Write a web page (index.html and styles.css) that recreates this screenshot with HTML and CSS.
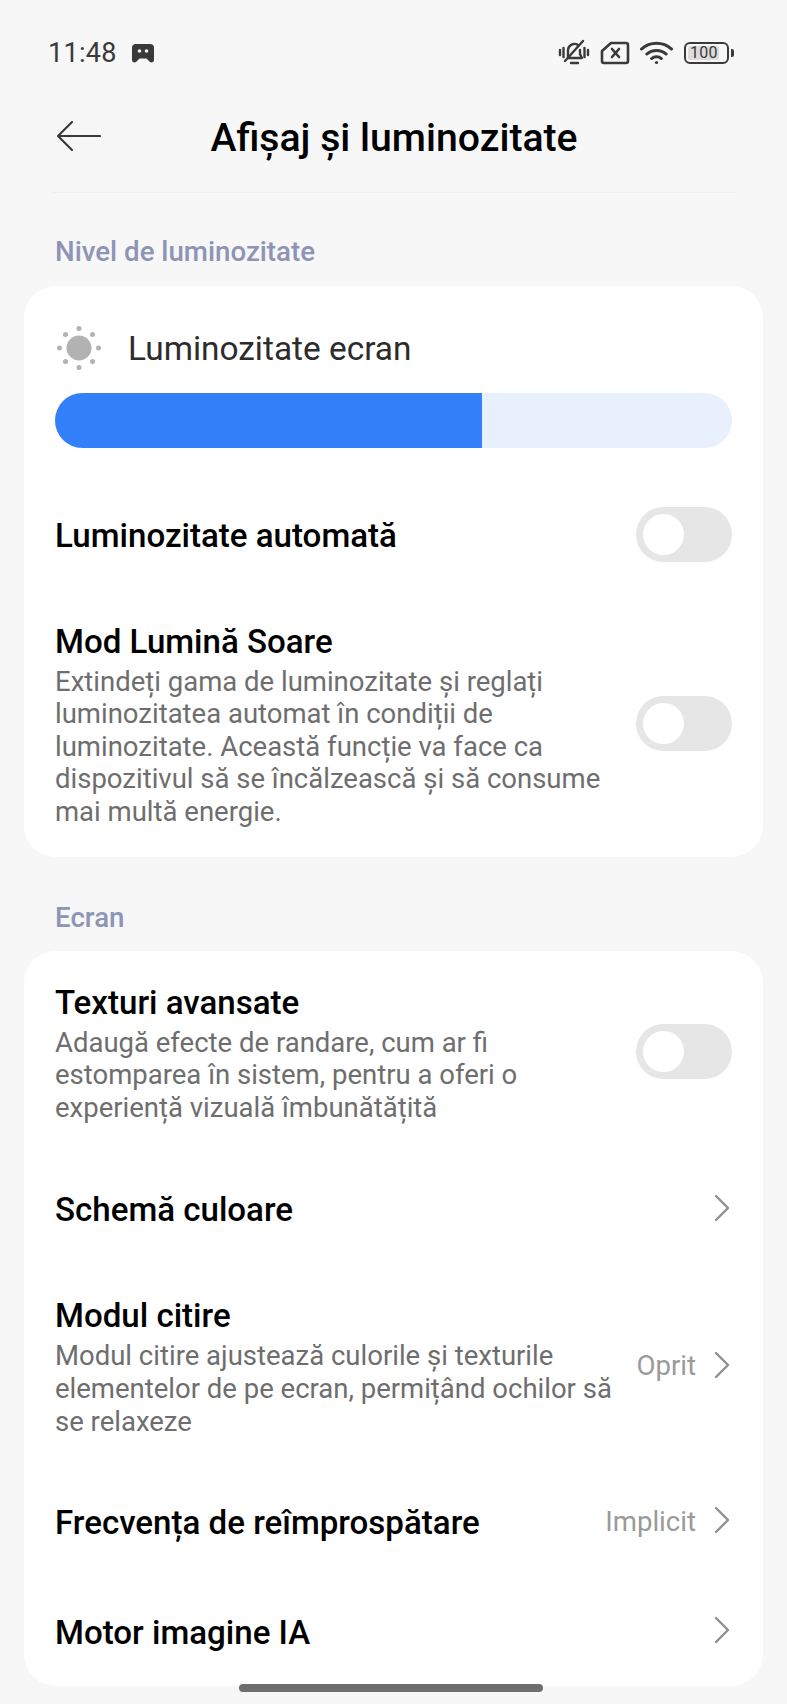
FILE: index.html
```html
<!DOCTYPE html>
<html lang="ro">
<head>
<meta charset="utf-8">
<title>Afișaj și luminozitate</title>
<link rel="stylesheet" href="styles.css">
</head>
<body>
<div class="status">
  <div class="status-left">
    <span class="time">11:48</span>
    <svg class="game" viewBox="0 0 22 19"><path fill="#3a3a3a" fill-rule="evenodd" d="M4 0h14a4 4 0 0 1 4 4v12a2.5 2.5 0 0 1-4.3 1.8L14.500 14.500h-7L4.300 17.800A2.500 2.500 0 0 1 0 16V4a4 4 0 0 1 4-4z"/><circle cx="7.500" cy="7" r="1.800" fill="#f7f7f7"/><circle cx="14.500" cy="7" r="1.800" fill="#f7f7f7"/></svg>
  </div>
  <div class="status-right">
    <svg class="ic-bell" viewBox="0 0 32 28" fill="none" stroke="#3a3a3a" stroke-width="2.400" stroke-linecap="round" stroke-linejoin="round"><path d="M10 19V11a6.500 6.500 0 0 1 10-5M22 11v4l2 4H10"/><path d="M13 24h7"/><path d="M7 22 25 2"/><path d="M2 11v5M5.500 9v9M26.500 9v9M30 11v5"/></svg>
    <svg class="ic-sim" viewBox="0 0 30 24" fill="none" stroke="#3a3a3a" stroke-width="2.600" stroke-linejoin="round"><path d="M11 2h15a2 2 0 0 1 2 2v16a2 2 0 0 1-2 2H4a2 2 0 0 1-2-2V10z"/><path stroke-linecap="round" d="M12 8l7 8M19 8l-7 8"/></svg>
    <svg class="ic-wifi" viewBox="0.5 0 31 24" preserveAspectRatio="none" fill="none" stroke="#3a3a3a" stroke-width="3" stroke-linecap="round"><path d="M2 8a20 20 0 0 1 28 0M7 13a13 13 0 0 1 18 0M11.500 17.500a6.500 6.500 0 0 1 9 0"/><circle cx="16" cy="21.500" r="1.500" fill="#3a3a3a" stroke="none"/></svg>
    <div class="battery"><div class="battery-body"><span class="battery-fill">100</span></div><span class="battery-tip"></span></div>
  </div>
</div>

<header class="nav">
  <svg class="back" viewBox="0 0 44 30" fill="none" stroke="#3a3a3a" stroke-width="2.200" stroke-linecap="round" stroke-linejoin="round"><path d="M1 15h42M15 1 1 15l14 14"/></svg>
  <h1 class="title">Afișaj și luminozitate</h1>
</header>

<h2 class="section first">Nivel de luminozitate</h2>
<section class="card card-a">
  <div class="bright-head">
    <svg class="sun" viewBox="0 0 44 44"><circle cx="22" cy="22" r="12.500" fill="#b2b2b2"/><g fill="#b2b2b2"><circle cx="22" cy="2.500" r="2.500"/><circle cx="22" cy="41.500" r="2.500"/><circle cx="2.500" cy="22" r="2.500"/><circle cx="41.500" cy="22" r="2.500"/><circle cx="8.500" cy="8.500" r="2.500"/><circle cx="35.500" cy="8.500" r="2.500"/><circle cx="8.500" cy="35.500" r="2.500"/><circle cx="35.500" cy="35.500" r="2.500"/></g></svg>
    <span class="bright-label">Luminozitate ecran</span>
  </div>
  <div class="slider"><div class="slider-fill"></div></div>
  <div class="row row-auto">
    <div class="row-text"><div class="row-title">Luminozitate automată</div></div>
    <span class="toggle"></span>
  </div>
  <div class="row row-sun">
    <div class="row-text">
      <div class="row-title row-title-top">Mod Lumină Soare</div>
      <p class="row-desc">Extindeți gama de luminozitate și reglați luminozitatea automat în condiții de luminozitate. Această funcție va face ca dispozitivul să se încălzească și să consume mai multă energie.</p>
    </div>
    <span class="toggle"></span>
  </div>
</section>

<h2 class="section">Ecran</h2>
<section class="card card-b">
  <div class="row row-tex">
    <div class="row-text">
      <div class="row-title row-title-top">Texturi avansate</div>
      <p class="row-desc">Adaugă efecte de randare, cum ar fi estomparea în sistem, pentru a oferi o experiență vizuală îmbunătățită</p>
    </div>
    <span class="toggle"></span>
  </div>
  <div class="row row-scheme">
    <div class="row-text"><div class="row-title">Schemă culoare</div></div>
    <svg class="chev" viewBox="0 0 16 28"><path d="M2 2l12 12L2 26"/></svg>
  </div>
  <div class="row row-read">
    <div class="row-text">
      <div class="row-title row-title-top">Modul citire</div>
      <p class="row-desc">Modul citire ajustează culorile și texturile elementelor de pe ecran, permițând ochilor să se relaxeze</p>
    </div>
    <span class="row-value">Oprit</span>
    <svg class="chev" viewBox="0 0 16 28"><path d="M2 2l12 12L2 26"/></svg>
  </div>
  <div class="row row-freq">
    <div class="row-text"><div class="row-title">Frecvența de reîmprospătare</div></div>
    <span class="row-value">Implicit</span>
    <svg class="chev" viewBox="0 0 16 28"><path d="M2 2l12 12L2 26"/></svg>
  </div>
  <div class="row row-motor">
    <div class="row-text"><div class="row-title">Motor imagine IA</div></div>
    <svg class="chev" viewBox="0 0 16 28"><path d="M2 2l12 12L2 26"/></svg>
  </div>
</section>
<div class="home-bar"></div>
</body>
</html>
```
FILE: styles.css
```css
* { box-sizing: border-box; }
html, body { margin: 0; padding: 0; }
body {
  width: 787px;
  height: 1704px;
  overflow: hidden;
  position: relative;
  background: #f7f7f7;
  font-family: Roboto, "Liberation Sans", sans-serif;
  color: #000;
}
.status {
  display: flex;
  justify-content: space-between;
  align-items: center;
  height: 30px;
  margin-top: 38px;
  padding: 0 53px 0 48px;
}
.status-left { display: flex; align-items: center; gap: 15px; }
.time { font-size: 27px; color: #3a3a3a; letter-spacing: .3px; }
.game { width: 22px; height: 19px; }
.status-right { display: flex; align-items: center; }
.ic-bell { width: 32px; height: 28px; margin-right: 10px; }
.ic-sim { width: 30px; height: 24px; margin-right: 10px; }
.ic-wifi { width: 33px; height: 24px; margin-right: 11px; }
.battery { display: flex; align-items: center; gap: 2px; }
.battery-body {
  width: 45px; height: 22px;
  border: 2.200px solid #3a3a3a;
  border-radius: 6px;
  padding: 2px;
}
.battery-fill {
  display: block;
  height: 14px;
  width: 31px;
  background: #dcdcdc;
  border-radius: 2px;
  font-size: 16px;
  line-height: 14px;
  color: #3a3a3a;
  letter-spacing: .3px;
  white-space: nowrap;
  padding-left: 2px;
}
.battery-tip { width: 3px; height: 8px; background: #3a3a3a; border-radius: 0 2px 2px 0; }

.nav {
  position: relative;
  height: 125px;
  margin: 0 52px 0 53px;
  border-bottom: 1px solid #efefef;
}
.back { position: absolute; left: 4px; top: 53px; width: 44px; height: 30px; }
.title {
  margin: 0;
  text-align: center;
  font-size: 39.200px;
  font-weight: 500;
  line-height: 48px;
  padding-top: 46px;
  color: #000;
}
.section {
  margin: 0;
  padding-left: 55px;
  font-size: 27.700px;
  line-height: 30px;
  font-weight: 500;
  color: #8d94b6;
}
.section.first { margin-top: 43.700px; }
.card {
  margin: 0 24px;
  background: #fff;
  border-radius: 32px;
  padding: 0 31px;
}
.card-a { margin-top: 19px; height: 571px; padding-top: 40px; }
.card-b { margin-top: 18.600px; height: 735px; padding-top: 30.500px; }
section.card-a + .section { margin-top: 46px; }
.bright-head { display: flex; align-items: center; gap: 27px; height: 44px; }
.sun { width: 44px; height: 44px; margin-left: 2px; }
.bright-label { font-size: 33.400px; color: #2c2c2c; padding-top: 2px; font-weight: 450; }
.slider { margin-top: 23px; height: 55px; background: #e8f0fe; border-radius: 27.500px; overflow: hidden; }
.slider-fill { width: 427px; height: 100%; background: #3480fb; }
.row { display: flex; align-items: center; }
.row-text { flex: 1; min-width: 0; }
.row-title { font-size: 33.100px; font-weight: 500; line-height: 45px; color: #000; }
.row-title-top { line-height: 41px; margin-bottom: 4px; }
.row-desc { margin: 0; font-size: 27.500px; line-height: 32.600px; color: #6e6e6e; padding-right: 18px; }
.toggle {
  position: relative;
  flex: none;
  width: 96px;
  height: 55px;
  border-radius: 27.500px;
  background: #e6e6e6;
}
.toggle::after {
  content: "";
  position: absolute;
  left: 7px; top: 7px;
  width: 41px; height: 41px;
  border-radius: 50%;
  background: #fff;
}
.row-auto { margin-top: 59px; height: 55px; }
.row-auto .row-text { padding-top: 2px; }
.row-sun { margin-top: 59px; }
.row-sun .toggle { margin-bottom: 2px; }
.row-tex .toggle { margin-bottom: 4px; }
.row-value { font-size: 27.600px; color: #9a9a9a; margin-right: 18px; margin-bottom: 2px; white-space: nowrap; }
.chev { flex: none; width: 16px; height: 28px; margin: 0 2px 4px 0; }
.chev path { fill: none; stroke: #8f8f8f; stroke-width: 2.400; stroke-linecap: round; stroke-linejoin: round; }
.row-scheme { margin-top: 65px; height: 40px; }
.row-read { margin-top: 65.800px; }
.row-freq { margin-top: 64px; height: 40px; }
.row-motor { margin-top: 70px; height: 40px; }
.home-bar {
  position: absolute;
  left: 239px; top: 1684px;
  width: 304px; height: 8px;
  border-radius: 4px;
  background: #6e6e6e;
}
```
